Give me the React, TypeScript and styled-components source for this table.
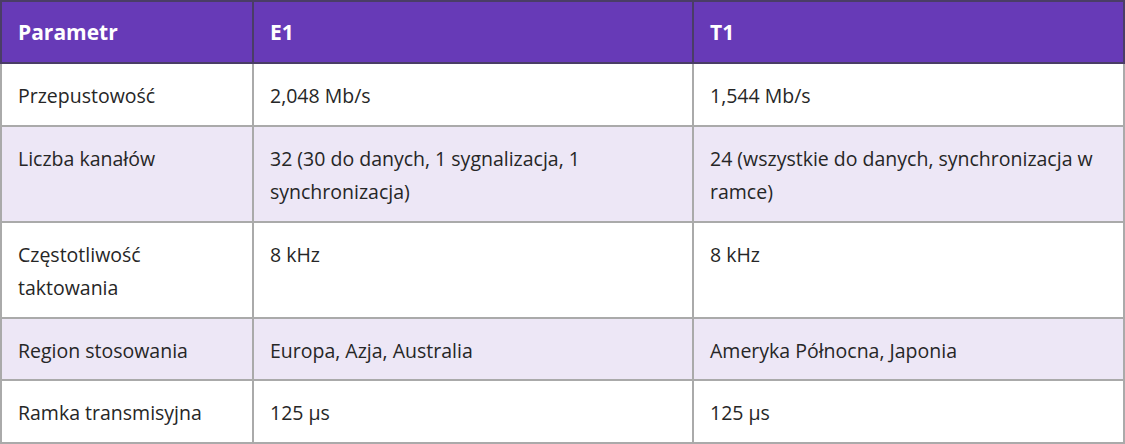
import styled, { createGlobalStyle } from 'styled-components'

const GlobalStyle = createGlobalStyle`
  html, body {
    margin: 0;
    padding: 0;
    background: #ffffff;
  }
  body {
    font-family: 'Segoe UI', 'Open Sans', 'Noto Sans', sans-serif;
    color: #222222;
  }
`

type Row = {
  param: string
  e1: string
  t1: string
}

const ROWS: Row[] = [
  { param: 'Przepustowość', e1: '2,048 Mb/s', t1: '1,544 Mb/s' },
  {
    param: 'Liczba kanałów',
    e1: '32 (30 do danych, 1 sygnalizacja, 1 synchronizacja)',
    t1: '24 (wszystkie do danych, synchronizacja w ramce)',
  },
  { param: 'Częstotliwość taktowania', e1: '8 kHz', t1: '8 kHz' },
  { param: 'Region stosowania', e1: 'Europa, Azja, Australia', t1: 'Ameryka Północna, Japonia' },
  { param: 'Ramka transmisyjna', e1: '125 µs', t1: '125 µs' },
]

const COLUMN_WIDTHS = [252, 440, 431]

const Table = styled.table`
  width: 1123px;
  border-collapse: collapse;
  table-layout: fixed;
  font-size: 19.5px;
`

const Col = styled.col<{ $width: number }>`
  width: ${({ $width }) => `${$width}px`};
`

const HeadCell = styled.th`
  background: #673ab7;
  color: #ffffff;
  font-weight: 700;
  font-size: 21px;
  text-align: left;
  height: 62px;
  padding: 0 16px;
  border: 2px solid #4a3d66;
  box-sizing: border-box;
`

const BodyRow = styled.tr<{ $shaded: boolean; $compact: boolean }>`
  background: ${({ $shaded }) => ($shaded ? '#ede7f6' : '#ffffff')};

  td {
    padding-bottom: ${({ $compact }) => ($compact ? '12px' : '13px')};
  }
`

const Cell = styled.td`
  padding: 15px 8px 13px 16px;
  line-height: 33px;
  vertical-align: top;
  border: 2px solid #aaaaaa;
  color: #262626;
`

export default function App() {
  return (
    <>
      <GlobalStyle />
      <Table>
        <colgroup>
          {COLUMN_WIDTHS.map((w, i) => (
            <Col key={i} $width={w} />
          ))}
        </colgroup>
        <thead>
          <tr>
            <HeadCell>Parametr</HeadCell>
            <HeadCell>E1</HeadCell>
            <HeadCell>T1</HeadCell>
          </tr>
        </thead>
        <tbody>
          {ROWS.map((row, i) => (
            <BodyRow key={row.param} $shaded={i % 2 === 1} $compact={i === 3}>
              <Cell>{row.param}</Cell>
              <Cell>{row.e1}</Cell>
              <Cell>{row.t1}</Cell>
            </BodyRow>
          ))}
        </tbody>
      </Table>
    </>
  )
}
